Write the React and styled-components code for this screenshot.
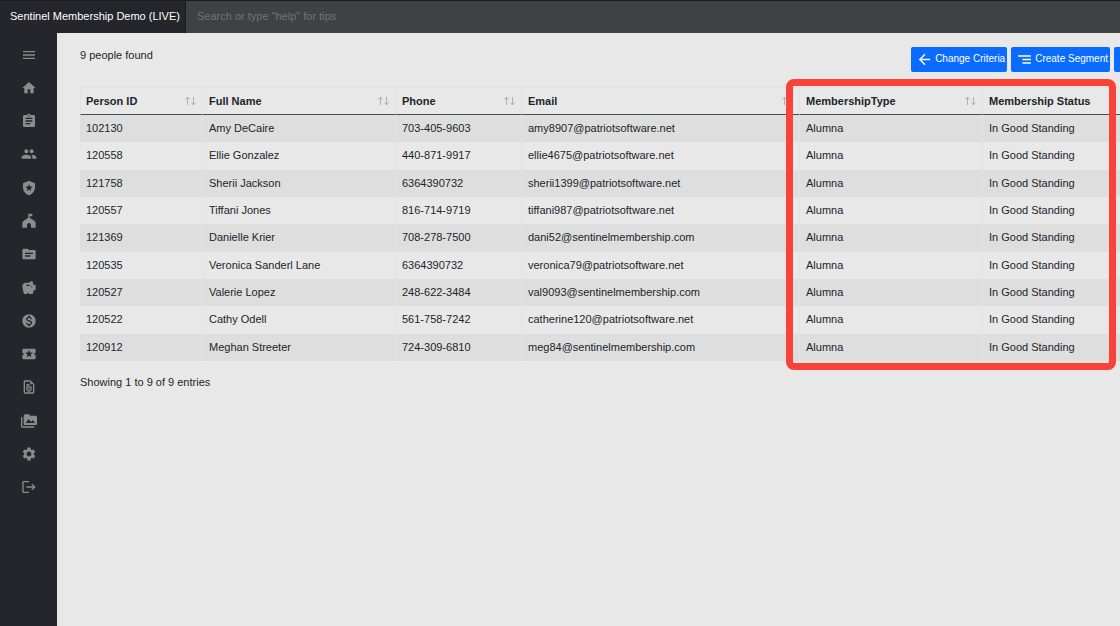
import { createGlobalStyle, styled } from 'styled-components';
import {
  MdArrowBack,
  MdAssignment,
  MdGroup,
  MdHome,
  MdLocalActivity,
  MdLocalPolice,
  MdLogout,
  MdMenu,
  MdMonetizationOn,
  MdOutlineFilePresent,
  MdPermMedia,
  MdSavings,
  MdSegment,
  MdSettings,
  MdSource
} from 'react-icons/md';

const GlobalStyle = createGlobalStyle`
  * {
    box-sizing: border-box;
  }

  body {
    margin: 0;
    background: #e8e8e8;
    color: #212529;
    font-family: 'Liberation Sans', Arial, sans-serif;
    font-size: 11px;
    line-height: 16px;
  }

  button,
  input {
    font: inherit;
  }
`;

const ChapterIcon = () => (
  <svg viewBox="0 0 24 24" fill="currentColor" aria-hidden="true">
    <path d="M11 1h6v4h-4v2l7 4.500 2 2.500v8h-7v-4a3 3 0 0 0-6 0v4H2v-8l2-2.500L11 7z" />
  </svg>
);

const SortIcon = () => (
  <svg viewBox="0 0 11 10" fill="none" stroke="currentColor" aria-hidden="true">
    <path d="M2.500 9V1M0.500 3.500l2-2.500 2 2.500M8.500 1v8M6.500 6.500l2 2.500 2-2.500" />
  </svg>
);

const links = [
  { label: 'Menu', icon: MdMenu },
  { label: 'Home', icon: MdHome },
  { label: 'Forms', icon: MdAssignment },
  { label: 'People', icon: MdGroup },
  { label: 'Officers', icon: MdLocalPolice },
  { label: 'Chapters', icon: ChapterIcon },
  { label: 'Files', icon: MdSource },
  { label: 'Savings', icon: MdSavings },
  { label: 'Payments', icon: MdMonetizationOn },
  { label: 'Events', icon: MdLocalActivity },
  { label: 'Documents', icon: MdOutlineFilePresent },
  { label: 'Media', icon: MdPermMedia },
  { label: 'Settings', icon: MdSettings },
  { label: 'Log out', icon: MdLogout }
];

const columns = [
  { title: 'Person ID', width: 123 },
  { title: 'Full Name', width: 193 },
  { title: 'Phone', width: 126 },
  { title: 'Email', width: 278 },
  { title: 'MembershipType', width: 183 },
  { title: 'Membership Status' }
];

const people = [
  ['102130', 'Amy DeCaire', '703-405-9603', 'amy8907@patriotsoftware.net'],
  ['120558', 'Ellie Gonzalez', '440-871-9917', 'ellie4675@patriotsoftware.net'],
  ['121758', 'Sherii Jackson', '6364390732', 'sherii1399@patriotsoftware.net'],
  ['120557', 'Tiffani Jones', '816-714-9719', 'tiffani987@patriotsoftware.net'],
  ['121369', 'Danielle Krier', '708-278-7500', 'dani52@sentinelmembership.com'],
  ['120535', 'Veronica Sanderl Lane', '6364390732', 'veronica79@patriotsoftware.net'],
  ['120527', 'Valerie Lopez', '248-622-3484', 'val9093@sentinelmembership.com'],
  ['120522', 'Cathy Odell', '561-758-7242', 'catherine120@patriotsoftware.net'],
  ['120912', 'Meghan Streeter', '724-309-6810', 'meg84@sentinelmembership.com']
];

const App = () => (
  <Page>
    <GlobalStyle />
    <TopBar>
      <Brand href="#">Sentinel Membership Demo (LIVE)</Brand>
      <Search
        type="search"
        aria-label="Search"
        placeholder={'Search or type "help" for tips'}
      />
    </TopBar>
    <Body>
      <Sidebar>
        <NavList>
          {links.map(({ label, icon: Icon }) => (
            <NavLink key={label} href="#" aria-label={label}>
              <Icon />
            </NavLink>
          ))}
        </NavList>
      </Sidebar>
      <Content>
        <Toolbar>
          <span>9 people found</span>
          <Actions>
            <Action>
              <MdArrowBack />
              Change Criteria
            </Action>
            <Action>
              <MdSegment />
              Create Segment
            </Action>
            <Action aria-label="More" />
          </Actions>
        </Toolbar>
        <TableArea>
          <Table>
            <thead>
              <tr>
                {columns.map(({ title, width }) => (
                  <HeadCell key={title} $width={width}>
                    <SortButton>
                      {title}
                      <SortIcon />
                    </SortButton>
                  </HeadCell>
                ))}
              </tr>
            </thead>
            <tbody>
              {people.map(person => (
                <Row key={person[0]}>
                  {person.map((value, i) => (
                    <Cell key={i}>{value}</Cell>
                  ))}
                  <Cell>Alumna</Cell>
                  <Cell>In Good Standing</Cell>
                </Row>
              ))}
            </tbody>
          </Table>
          <Highlight />
        </TableArea>
        <Summary>Showing 1 to 9 of 9 entries</Summary>
      </Content>
    </Body>
  </Page>
);

const Page = styled.div`
  display: flex;
  flex-direction: column;
  min-height: 100vh;
  overflow: hidden;
`;

const TopBar = styled.header`
  display: flex;
  height: 33px;
  border-top: 1px solid #1b1c20;
  background: #25262b;
`;

const Brand = styled.a`
  flex: none;
  width: 186px;
  padding: 7px 10px;
  border-right: 1px solid #1b1c20;
  color: #fff;
  font-weight: 500;
  text-decoration: none;
  white-space: nowrap;
`;

const Search = styled.input`
  flex: 1;
  min-width: 0;
  padding: 0 11px 2px;
  border: 0;
  outline: 0;
  background: #404142;
  color: #ddd;

  &::placeholder {
    color: #6c757d;
  }
`;

const Body = styled.div`
  display: flex;
  flex: 1;
`;

const Sidebar = styled.aside`
  flex: none;
  width: 57px;
  background: #25262b;
`;

const NavList = styled.nav`
  display: grid;
  grid-auto-rows: 1fr;
  height: 466px;
  margin-top: 5px;
`;

const NavLink = styled.a`
  display: flex;
  align-items: center;
  justify-content: center;
  color: #8b8c8c;

  svg {
    width: 16px;
    height: 16px;
  }
`;

/* the table is wider than the window, the rest is cut off on the right */
const Content = styled.main`
  flex: none;
  width: calc(100% - 17px);
  padding: 14px 0 0 23px;
`;

const Toolbar = styled.div`
  display: flex;
  align-items: flex-start;
  justify-content: space-between;
  height: 40px;
`;

const Actions = styled.div`
  display: flex;
  gap: 4px;
`;

const Action = styled.button`
  display: flex;
  align-items: center;
  gap: 2px;
  min-width: 46px;
  height: 25px;
  padding: 0 2px 1px 5px;
  border: 0;
  border-radius: 2px;
  background: #0a6cff;
  color: #fff;
  font-size: 10px;
  font-weight: 500;
  white-space: nowrap;

  svg {
    width: 17px;
    height: 17px;
  }
`;

const TableArea = styled.div`
  position: relative;
`;

const Table = styled.table`
  width: 100%;
  table-layout: fixed;
  border-collapse: separate;
  border-spacing: 0;
`;

const HeadCell = styled.th`
  width: ${props => (props.$width ? `${props.$width}px` : 'auto')};
  height: 28px;
  padding: 0 6px 1px;
  border-top: 1px solid #e2e2e2;
  border-right: 1px solid #e2e2e2;
  border-bottom: 1px solid #4a4b4c;

  &:first-child {
    border-left: 1px solid #e2e2e2;
    padding-left: 5px;
  }
`;

const SortButton = styled.button`
  display: flex;
  align-items: center;
  justify-content: space-between;
  width: 100%;
  padding: 0;
  border: 0;
  background: none;
  color: inherit;
  font-weight: bold;

  svg {
    width: 11px;
    height: 10px;
    color: #b0b0b0;
  }
`;

const Cell = styled.td`
  padding: 0 6px 2px;
  border-right: 1px solid #e2e2e2;
`;

const Row = styled.tr`
  height: 27px;

  &:nth-child(odd) {
    background: #dedede;
  }

  &:nth-child(3n + 2) {
    height: 28px;
  }
`;

const Highlight = styled.div`
  position: absolute;
  top: -8px;
  bottom: -9px;
  left: 706px;
  width: 330px;
  border: 7px solid #fa4238;
  border-radius: 8px;
  pointer-events: none;
`;

const Summary = styled.p`
  margin: 13px 0;
`;

export default App;
